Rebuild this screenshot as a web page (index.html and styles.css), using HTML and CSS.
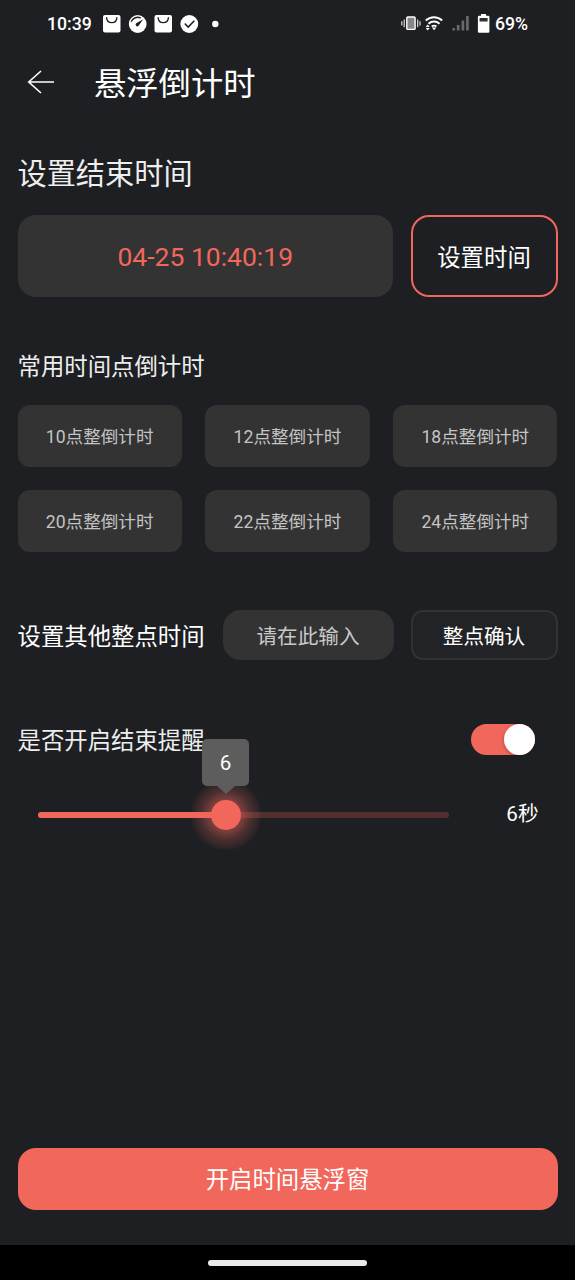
FILE: index.html
```html
<!DOCTYPE html>
<html lang="zh-CN">
<head>
<meta charset="utf-8">
<title>悬浮倒计时</title>
<link rel="stylesheet" href="styles.css">
</head>
<body>
<div class="screen">
  <div class="status">
    <span class="clock">10:39</span>
    <svg class="status-left" width="120" height="20" viewBox="0 0 120 20">
      <g fill="#fff">
        <rect x="0" y="1" width="17.5" height="17.5" rx="2"/>
        <circle cx="34.7" cy="10" r="8.9"/>
        <rect x="51.5" y="1" width="17.5" height="17.5" rx="2"/>
        <circle cx="86.3" cy="10" r="8.9"/>
        <circle cx="112.3" cy="10" r="3.2"/>
      </g>
      <g fill="none" stroke="#1e1f23" stroke-linecap="round">
        <path d="M3.6 3.6c.4 6.8 9.9 6.8 10.3 0M55.1 3.6c.4 6.8 9.9 6.8 10.3 0" stroke-width="1.3"/>
        <path d="M28.4 7.2a7.2 7.2 0 0 1 9-3.4" stroke-width="1.4"/>
        <path d="M82.2 10l3 3 5.6-5.8" stroke-width="1.6"/>
      </g>
      <path d="M33.2 9.2L40.2 5.2l-4.6 6.6a1.7 1.7 0 0 1-2.4-2.6z" fill="#1e1f23"/>
    </svg>
    <svg class="status-right" width="92" height="22" viewBox="400 13 92 22">
      <rect x="406.8" y="17" width="8.3" height="12.4" rx="1" fill="#858689" stroke="#fff" stroke-width="1.4"/>
      <path d="M404.2 19.4v7.8M401.8 21.2v4.2M417.7 19.4v7.8M420 21.2v4.2" stroke="#ddd" stroke-width="1.2"/>
      <g fill="none" stroke="#fff" stroke-width="2">
        <path d="M425.8 20.6a12 12 0 0 1 16.4 0M428.5 23.8a8 8 0 0 1 11 0"/>
        <path d="M431.7 26.5a4 4 0 0 1 4.8 0" stroke-width="1.8"/>
      </g>
      <path d="M434.1 30.3l-2.2-2.7h4.4zM427.7 24.5l2 2.5h-4zM427.7 30.4l2-2.5h-4z" fill="#fff"/>
      <path d="M453.7 28v2.5M458.2 25v5.5M462.9 20.5v10M467.4 16v14.5" stroke="#68696c" stroke-width="2.7"/>
      <path d="M481 15.8v-1.7h5v1.7h2.2a1.2 1.2 0 0 1 1.2 1.2v14.6a1.2 1.2 0 0 1-1.2 1.2h-9.1a1.2 1.2 0 0 1-1.2-1.2V17a1.2 1.2 0 0 1 1.2-1.2z" fill="#fff"/>
      <rect x="479.6" y="18" width="8" height="3.5" fill="#303135"/>
    </svg>
    <span class="percent">69%</span>
  </div>

  <header class="header">
    <svg class="back" width="28" height="26" viewBox="0 0 28 26">
      <path d="M14 2L1.7 13L14 24M1.7 13H27" fill="none" stroke="#fff" stroke-width="1.6"/>
    </svg>
    <h1 class="title">悬浮倒计时</h1>
  </header>

  <main class="content">
    <h2 class="heading">设置结束时间</h2>
    <div class="end-row">
      <div class="end-value">04-25 10:40:19</div>
      <div class="set-button">设置时间</div>
    </div>

    <h3 class="label presets-label">常用时间点倒计时</h3>
    <div class="presets">
      <div class="preset">10点整倒计时</div>
      <div class="preset">12点整倒计时</div>
      <div class="preset">18点整倒计时</div>
      <div class="preset">20点整倒计时</div>
      <div class="preset">22点整倒计时</div>
      <div class="preset">24点整倒计时</div>
    </div>

    <div class="hour-row">
      <span class="label hour-label">设置其他整点时间</span>
      <div class="hour-input">请在此输入</div>
      <div class="hour-confirm">整点确认</div>
    </div>

    <div class="remind-row">
      <span class="label remind-label">是否开启结束提醒</span>
      <div class="switch"><div class="knob"></div></div>
    </div>

    <div class="slider-row">
      <div class="track">
        <div class="halo"></div>
        <div class="fill"></div>
        <div class="thumb"></div>
        <div class="tip">6</div>
      </div>
      <span class="seconds">6秒</span>
    </div>

    <div class="start">开启时间悬浮窗</div>
  </main>

  <div class="nav"><div class="pill"></div></div>
</div>
</body>
</html>
```
FILE: styles.css
```css
* { box-sizing: border-box; }
body {
  margin: 0;
  background: #1e1f23;
  color: #fff;
  font-family: Roboto, "Noto Sans CJK SC", sans-serif;
}
.screen {
  width: 575px;
  height: 1280px;
  display: flex;
  flex-direction: column;
  overflow: hidden;
}
.status {
  height: 48px;
  flex: none;
  display: flex;
  align-items: center;
  padding: 0 44px 0 47px;
  font-size: 17.7px;
  font-weight: 500;
  line-height: 48px;
}
.clock { width: 56px; }
.status-left { margin-top: -1px; }
.status-right { margin-left: auto; }
.percent { width: 36px; margin-left: 3px; white-space: nowrap; }
.header {
  height: 70px;
  flex: none;
  display: flex;
  align-items: center;
  padding-left: 27px;
}
.back { margin-top: -2px; }
.title {
  margin: 2px 0 0 39px;
  font-size: 32.3px;
  font-weight: 400;
  line-height: 70px;
}
.content {
  flex: 1;
  display: flex;
  flex-direction: column;
  padding: 34px 17.5px 35px;
}
.heading {
  margin: 0;
  color: #eee;
  font-size: 29.2px;
  font-weight: 400;
  line-height: 44px;
}
.end-row {
  display: flex;
  gap: 17.5px;
  margin-top: 19px;
  height: 82px;
}
.end-value, .set-button {
  display: flex;
  align-items: center;
  justify-content: center;
  border-radius: 18px;
}
.end-value {
  flex: 1;
  background: #333;
  color: #f2675b;
  font-size: 26.5px;
}
.set-button {
  width: 147px;
  border: 2px solid #f2675b;
  font-size: 23.4px;
}
.label {
  margin: 0;
  color: #eee;
  font-size: 23.4px;
  font-weight: 400;
  line-height: 36px;
}
.presets-label { margin-top: 52px; }
.presets {
  display: grid;
  grid-template-columns: repeat(3, 1fr);
  grid-auto-rows: 61.5px;
  gap: 23.5px;
  margin-top: 20px;
}
.preset {
  display: flex;
  align-items: center;
  justify-content: center;
  border-radius: 12px;
  background: #333;
  color: #c4c4c4;
  font-size: 17.6px;
}
.hour-row {
  display: flex;
  height: 50px;
  margin-top: 58.5px;
}
.hour-label {
  width: 205px;
  padding-top: 2px;
  line-height: 50px;
  color: #fff;
}
.hour-input, .hour-confirm {
  display: flex;
  align-items: center;
  justify-content: center;
  font-size: 20.6px;
}
.hour-input {
  width: 171px;
  border-radius: 18px;
  background: #333;
  color: #c8c8c8;
}
.hour-confirm {
  width: 147px;
  margin-left: auto;
  border: 2px solid #313236;
  border-radius: 12px;
  background: #222327;
}
.remind-row {
  display: flex;
  align-items: center;
  justify-content: space-between;
  height: 36px;
  margin-top: 61px;
  padding-right: 22.5px;
}
.remind-label { padding-top: 4px; }
.switch {
  display: flex;
  justify-content: flex-end;
  width: 64px;
  height: 31px;
  border-radius: 16px;
  background: #f2675b;
}
.knob {
  width: 31px;
  height: 31px;
  border-radius: 50%;
  background: #fff;
  box-shadow: -1px 1px 3px rgba(0, 0, 0, .2);
}
.slider-row {
  display: flex;
  align-items: center;
  justify-content: space-between;
  height: 36px;
  margin-top: 40px;
  padding: 0 19px 0 20.5px;
}
.track {
  position: relative;
  width: 411px;
  height: 6px;
  border-radius: 3px;
  background: #512f30;
}
.fill {
  position: relative;
  width: 188px;
  height: 6px;
  border-radius: 3px;
  background: #f2675b;
}
.halo, .thumb {
  position: absolute;
  left: 188px;
  top: 3px;
  border-radius: 50%;
  transform: translate(-50%, -50%);
}
.halo {
  width: 72px;
  height: 72px;
  background: radial-gradient(circle closest-side, rgba(242, 103, 91, .5) 38%, rgba(242, 103, 91, .22) 68%, rgba(242, 103, 91, .07) 92%, transparent 100%);
}
.thumb {
  width: 30px;
  height: 30px;
  background: #f2675b;
}
.tip {
  position: absolute;
  left: 164px;
  top: -73px;
  width: 47px;
  height: 47px;
  border-radius: 5px;
  background: #5d5d5d;
  font: 20.6px/49px Roboto, sans-serif;
  text-align: center;
}
.tip::after {
  content: "";
  position: absolute;
  left: 15px;
  top: 46.5px;
  border: solid transparent;
  border-width: 8px 9px 0;
  border-top-color: #5d5d5d;
}
.seconds {
  margin-top: -2px;
  font: 20.6px/36px Roboto, "Noto Sans CJK SC", sans-serif;
}
.start {
  height: 62px;
  margin-top: auto;
  padding-top: 1px;
  border-radius: 18px;
  background: #f2675b;
  font-size: 23.4px;
  line-height: 62px;
  text-align: center;
}
.nav {
  height: 35px;
  flex: none;
  display: flex;
  align-items: center;
  justify-content: center;
  background: #000;
}
.pill {
  width: 159px;
  height: 6px;
  border-radius: 3px;
  background: #ebebeb;
}
```
